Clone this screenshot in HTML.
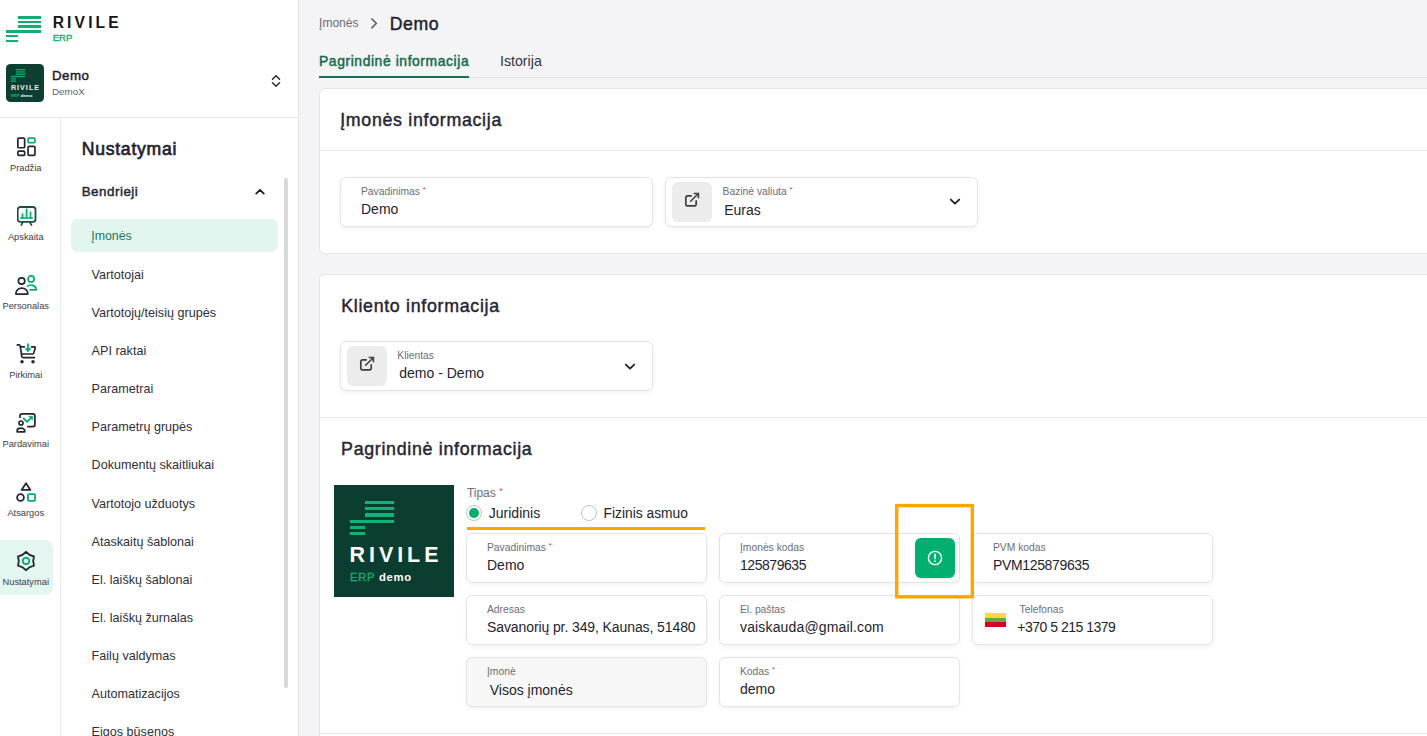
<!DOCTYPE html>
<html><head><meta charset="utf-8"><style>
html,body{margin:0;padding:0;width:1427px;height:736px;overflow:hidden;background:#fff;font-family:"Liberation Sans", sans-serif}
.t{position:absolute;white-space:nowrap;line-height:1}
.r{position:absolute}
</style></head><body>
<div class="r" style="left:0px;top:0px;width:298px;height:736px;background:#fff"></div>
<div class="r" style="left:298px;top:0px;width:1px;height:736px;background:#e6e6e8"></div>
<div class="r" style="left:0px;top:117px;width:298px;height:1px;background:#e6e6e8"></div>
<div class="r" style="left:60px;top:118px;width:1px;height:618px;background:#e9e9eb"></div>
<div class="r" style="left:18px;top:16px;width:23.299999999999997px;height:2.5px;background:#0fb070"></div>
<div class="r" style="left:18px;top:20.7px;width:23.299999999999997px;height:2.5px;background:#0fb070"></div>
<div class="r" style="left:18px;top:25.4px;width:23.299999999999997px;height:2.5px;background:#0fb070"></div>
<div class="r" style="left:6px;top:30.1px;width:35.3px;height:2.5px;background:#0fb070"></div>
<div class="r" style="left:6px;top:34.8px;width:12px;height:2.5px;background:#0fb070"></div>
<div class="r" style="left:6px;top:39.5px;width:12px;height:2.5px;background:#0fb070"></div>
<div class="t" style="left:52.70px;top:15.00px;font-size:15.6px;font-weight:700;color:#151515;letter-spacing:3.15px;">RIVILE</div>
<div class="t" style="left:52.80px;top:33.00px;font-size:9.6px;font-weight:400;color:#10b070;letter-spacing:-0.1px;-webkit-text-stroke:0.35px #10b070;">ERP</div>
<svg class="r" style="left:6px;top:64px" width="38" height="38" viewBox="0 0 38 38"><rect x="0" y="0" width="38" height="38" rx="4.5" fill="#0b3f31"/><rect x="9.9" y="5.0" width="9.3" height="1.25" fill="#0fb070"/><rect x="9.9" y="7.3" width="9.3" height="1.25" fill="#0fb070"/><rect x="9.9" y="9.6" width="9.3" height="1.25" fill="#0fb070"/><rect x="4.9" y="11.9" width="14.3" height="1.25" fill="#0fb070"/><rect x="4.9" y="14.2" width="5.1" height="1.25" fill="#0fb070"/><rect x="4.9" y="16.5" width="5.1" height="1.25" fill="#0fb070"/><text x="4.9" y="26.4" font-family="Liberation Sans" font-size="7.1" font-weight="700" fill="#f2f2f2" letter-spacing="1.05">RIVILE</text><text x="4.9" y="32.6" font-family="Liberation Sans" font-size="4.3" font-weight="700" fill="#0fb070">ERP <tspan fill="#fff">demo</tspan></text></svg>
<div class="t" style="left:51.90px;top:69.00px;font-size:13.3px;font-weight:400;color:#20202c;letter-spacing:0.55px;-webkit-text-stroke:0.45px #20202c;">Demo</div>
<div class="t" style="left:52.00px;top:87.00px;font-size:9.8px;font-weight:400;color:#5c6272;">DemoX</div>
<svg class="r" style="left:270px;top:73px" width="12" height="16" viewBox="0 0 12 16"><path d="M2.5 6.3 L6 2.8 L9.5 6.3 M2.5 9.7 L6 13.2 L9.5 9.7" fill="none" stroke="#2a2a2e" stroke-width="1.5" stroke-linecap="round" stroke-linejoin="round"/></svg>
<div class="r" style="left:0px;top:540px;width:53px;height:55px;background:#e4f6f0;border-radius:0 8px 8px 0"></div>
<svg class="r" style="left:16.5px;top:137px" width="20" height="20" viewBox="0 0 20 20"><rect x="0.85" y="1.15" width="6.8" height="9.6" rx="1" fill="none" stroke="#232634" stroke-width="1.7"/><rect x="11.05" y="1.15" width="6.9" height="4.6" rx="1" fill="none" stroke="#04ad6c" stroke-width="1.7"/><rect x="0.85" y="14.15" width="6.8" height="4.2" rx="1" fill="none" stroke="#232634" stroke-width="1.7"/><rect x="11.05" y="9.35" width="6.9" height="9.0" rx="1" fill="none" stroke="#232634" stroke-width="1.7"/></svg>
<div class="t" style="left:0;width:51.5px;text-align:center;top:163.93px;font-size:9.3px;color:#3b3b48">Pradžia</div>
<svg class="r" style="left:16.5px;top:206px" width="21" height="21" viewBox="0 0 21 21"><rect x="0.7" y="1" width="17.8" height="14.8" rx="2.6" fill="none" stroke="#1d4e41" stroke-width="1.8"/><path d="M3.8 12 H15.4" stroke="#04ad6c" stroke-width="1.7" stroke-linecap="round" fill="none"/><path d="M5.5 12 V8.1 M9.6 12 V3.4 M13.5 12 V6.3" stroke="#04ad6c" stroke-width="1.8" stroke-linecap="round" fill="none"/><path d="M5.7 16.4 L4.3 19.1 M12.9 16.4 L14.6 19.1" stroke="#1d4e41" stroke-width="1.7" stroke-linecap="round" fill="none"/></svg>
<div class="t" style="left:0;width:51.5px;text-align:center;top:232.93px;font-size:9.3px;color:#3b3b48">Apskaita</div>
<svg class="r" style="left:14px;top:274px" width="25" height="22" viewBox="0 0 25 22"><circle cx="7.6" cy="7" r="3.2" fill="none" stroke="#232634" stroke-width="1.7"/><path d="M1.95 20.05 L1.95 19.2 A5.9 5.1 0 0 1 13.75 19.2 L13.75 20.05 Z" fill="none" stroke="#232634" stroke-width="1.7" stroke-linejoin="round"/><circle cx="17.1" cy="4.9" r="3.05" fill="none" stroke="#04ad6c" stroke-width="1.7"/><path d="M12.9 12.6 C15.5 10.2 21 10.2 22.15 14.6 V15.85 H15.4" fill="none" stroke="#04ad6c" stroke-width="1.7" stroke-linejoin="round"/></svg>
<div class="t" style="left:0;width:51.5px;text-align:center;top:301.93px;font-size:9.3px;color:#3b3b48">Personalas</div>
<svg class="r" style="left:14px;top:342px" width="24" height="23" viewBox="0 0 24 23"><path d="M3.3 2.9 H5 Q6 2.9 6.2 3.9 L7.8 14.5 Q8 15.6 9.2 15.6 H20.5" fill="none" stroke="#232634" stroke-width="1.7" stroke-linecap="round" stroke-linejoin="round"/><path d="M7 4.9 H10.3 M17.5 4.9 H20.3 Q21.6 4.9 21.3 6.1 L19.6 11.2 Q19.3 12 18.5 12 H8.2" fill="none" stroke="#232634" stroke-width="1.7" stroke-linecap="round" stroke-linejoin="round"/><circle cx="8" cy="19.8" r="1.75" fill="#232634"/><circle cx="19" cy="19.8" r="1.75" fill="#232634"/><path d="M14 2.2 V7.5" stroke="#04ad6c" stroke-width="1.8" stroke-linecap="round" fill="none"/><path d="M11.2 6.6 H16.9 L14 9.9 Z" fill="#04ad6c" stroke="#04ad6c" stroke-width="0.6" stroke-linejoin="round"/></svg>
<div class="t" style="left:0;width:51.5px;text-align:center;top:370.93px;font-size:9.3px;color:#3b3b48">Pirkimai</div>
<svg class="r" style="left:14px;top:410px" width="24" height="24" viewBox="0 0 24 24"><path d="M6 7.3 V5.9 Q6 3.9 8 3.9 H18.9 Q20.9 3.9 20.9 5.9 V14.6 Q20.9 16.6 18.9 16.6 H13.9" fill="none" stroke="#232634" stroke-width="1.7" stroke-linecap="round"/><circle cx="7" cy="13" r="2" fill="none" stroke="#232634" stroke-width="1.7"/><path d="M3.15 21.85 V20.6 A3.8 2.4 0 0 1 10.75 20.6 V21.85 Z" fill="none" stroke="#232634" stroke-width="1.7" stroke-linejoin="round"/><path d="M9.7 8.5 L13.1 11.9 L17.4 7.6" fill="none" stroke="#04ad6c" stroke-width="1.8" stroke-linecap="round" stroke-linejoin="round"/><path d="M14.6 6.3 H18.5 V10.2 Z" fill="#04ad6c" stroke="#04ad6c" stroke-width="0.6" stroke-linejoin="round"/></svg>
<div class="t" style="left:0;width:51.5px;text-align:center;top:439.93px;font-size:9.3px;color:#3b3b48">Pardavimai</div>
<svg class="r" style="left:14px;top:480px" width="24" height="24" viewBox="0 0 24 24"><path d="M12 3.3 L16.4 9.9 H7.6 Z" fill="none" stroke="#232634" stroke-width="1.8" stroke-linejoin="round"/><circle cx="6.5" cy="17.5" r="3.4" fill="none" stroke="#232634" stroke-width="1.8"/><rect x="13.95" y="14.05" width="7.1" height="6.8" rx="1" fill="none" stroke="#04ad6c" stroke-width="1.8"/></svg>
<div class="t" style="left:0;width:51.5px;text-align:center;top:508.93px;font-size:9.3px;color:#3b3b48">Atsargos</div>
<svg class="r" style="left:14px;top:549px" width="24" height="24" viewBox="0 0 24 24"><path d="M12.00 2.80 Q15.20 6.46 19.97 7.40 Q18.40 12.00 19.97 16.60 Q15.20 17.54 12.00 21.20 Q8.80 17.54 4.03 16.60 Q5.60 12.00 4.03 7.40 Q8.80 6.46 12.00 2.80 Z" fill="none" stroke="#232634" stroke-width="1.8" stroke-linejoin="round"/><circle cx="12" cy="12" r="3.2" fill="none" stroke="#04ad6c" stroke-width="1.75"/></svg>
<div class="t" style="left:0;width:51.5px;text-align:center;top:577.93px;font-size:9.3px;color:#3b3b48">Nustatymai</div>
<div class="t" style="left:81.70px;top:141.00px;font-size:17.6px;font-weight:400;color:#22222e;letter-spacing:0.75px;-webkit-text-stroke:0.65px #22222e;">Nustatymai</div>
<div class="t" style="left:81.70px;top:185.00px;font-size:13.4px;font-weight:400;color:#262632;letter-spacing:0.5px;-webkit-text-stroke:0.45px #262632;">Bendrieji</div>
<svg class="r" style="left:254px;top:186px" width="12" height="10" viewBox="0 0 12 10"><path d="M2.2 7.6 L6 3.8 L9.8 7.6" fill="none" stroke="#1f1f2a" stroke-width="1.8" stroke-linecap="round" stroke-linejoin="round"/></svg>
<div class="r" style="left:71px;top:219px;width:207px;height:33px;background:#e3f5ef;border-radius:7px"></div>
<div class="t" style="left:91.20px;top:230.00px;font-size:12.4px;font-weight:400;color:#1b7c5c;">Įmonės</div>
<div class="t" style="left:91.60px;top:269.00px;font-size:12.6px;font-weight:400;color:#2f2f3c;">Vartotojai</div>
<div class="t" style="left:91.60px;top:307.00px;font-size:12.6px;font-weight:400;color:#2f2f3c;">Vartotojų/teisių grupės</div>
<div class="t" style="left:91.60px;top:345.00px;font-size:12.6px;font-weight:400;color:#2f2f3c;">API raktai</div>
<div class="t" style="left:91.60px;top:383.00px;font-size:12.6px;font-weight:400;color:#2f2f3c;">Parametrai</div>
<div class="t" style="left:91.60px;top:421.00px;font-size:12.6px;font-weight:400;color:#2f2f3c;">Parametrų grupės</div>
<div class="t" style="left:91.60px;top:459.00px;font-size:12.6px;font-weight:400;color:#2f2f3c;">Dokumentų skaitliukai</div>
<div class="t" style="left:91.60px;top:498.00px;font-size:12.6px;font-weight:400;color:#2f2f3c;">Vartotojo užduotys</div>
<div class="t" style="left:91.60px;top:536.00px;font-size:12.6px;font-weight:400;color:#2f2f3c;">Ataskaitų šablonai</div>
<div class="t" style="left:91.60px;top:574.00px;font-size:12.6px;font-weight:400;color:#2f2f3c;">El. laiškų šablonai</div>
<div class="t" style="left:91.60px;top:612.00px;font-size:12.6px;font-weight:400;color:#2f2f3c;">El. laiškų žurnalas</div>
<div class="t" style="left:91.60px;top:650.00px;font-size:12.6px;font-weight:400;color:#2f2f3c;">Failų valdymas</div>
<div class="t" style="left:91.60px;top:688.00px;font-size:12.6px;font-weight:400;color:#2f2f3c;">Automatizacijos</div>
<div class="t" style="left:91.60px;top:726.00px;font-size:12.6px;font-weight:400;color:#2f2f3c;">Eigos būsenos</div>
<div class="r" style="left:284px;top:178px;width:4px;height:510px;background:#d9d9db;border-radius:2px"></div>
<div class="r" style="left:299px;top:0px;width:1128px;height:736px;background:#f4f4f6"></div>
<div class="t" style="left:319.10px;top:17.00px;font-size:12px;font-weight:400;color:#6a6a76;">Įmonės</div>
<svg class="r" style="left:368px;top:17px" width="12" height="13" viewBox="0 0 12 13"><path d="M3.9 1.8 L8.3 6.3 L3.9 10.8" fill="none" stroke="#6b6b6e" stroke-width="1.7" stroke-linecap="round" stroke-linejoin="round"/></svg>
<div class="t" style="left:389.70px;top:16.00px;font-size:17.7px;font-weight:400;color:#22222e;letter-spacing:0.6px;-webkit-text-stroke:0.44px #22222e;">Demo</div>
<div class="r" style="left:469px;top:77px;width:958px;height:1px;background:#e3e3e4"></div>
<div class="t" style="left:319.00px;top:55.00px;font-size:13.9px;font-weight:400;color:#166a50;letter-spacing:0.58px;-webkit-text-stroke:0.48px #166a50;">Pagrindinė informacija</div>
<div class="r" style="left:319px;top:76px;width:150px;height:2px;background:#177156"></div>
<div class="t" style="left:500.00px;top:54.00px;font-size:14.2px;font-weight:400;color:#33333f;">Istorija</div>
<div class="r" style="left:319px;top:88px;width:1141px;height:166px;background:#fff;border:1px solid #e6e6e7;border-radius:6px;box-sizing:border-box"></div>
<div class="t" style="left:340.20px;top:112.00px;font-size:17.8px;font-weight:400;color:#262636;letter-spacing:0.7px;-webkit-text-stroke:0.45px #262636;">Įmonės informacija</div>
<div class="r" style="left:320px;top:150px;width:1107px;height:1px;background:#e9e9ea"></div>
<div class="r" style="left:340px;top:177px;width:313px;height:50px;background:#fff;border:1px solid #e3e3e4;border-radius:6px;box-sizing:border-box;box-shadow:0 2px 5px rgba(0,0,0,0.05)"></div>
<div class="t" style="left:361.00px;top:187.00px;font-size:10.3px;font-weight:400;color:#6d6d78;">Pavadinimas <span style="color:#e5383b;font-size:8px;position:relative;top:-3px">*</span></div>
<div class="t" style="left:361.00px;top:202.00px;font-size:14px;font-weight:400;color:#23232f;">Demo</div>
<div class="r" style="left:665px;top:177px;width:313px;height:50px;background:#fff;border:1px solid #e3e3e4;border-radius:6px;box-sizing:border-box;box-shadow:0 2px 5px rgba(0,0,0,0.05)"></div>
<div class="t" style="left:722.60px;top:187.00px;font-size:10.3px;font-weight:400;color:#6d6d78;">Bazinė valiuta <span style="color:#e5383b;font-size:8px;position:relative;top:-3px">*</span></div>
<div class="t" style="left:724.20px;top:203.00px;font-size:14px;font-weight:400;color:#23232f;">Euras</div>
<div class="r" style="left:672px;top:182px;width:40px;height:40px;background:#ececec;border-radius:6px"></div>
<svg class="r" style="left:684px;top:192px" width="16" height="16" viewBox="0 0 16 16"><path d="M7.8 3.8 H3.8 Q1.8 3.8 1.8 5.8 V11.9 Q1.8 13.9 3.8 13.9 H10.2 Q12.2 13.9 12.2 11.9 V8.2" fill="none" stroke="#3c3c3e" stroke-width="1.65"/><path d="M6.6 9.2 L14.2 1.7" fill="none" stroke="#3c3c3e" stroke-width="1.45" stroke-linecap="round"/><path d="M9.8 1.5 H14.4 V6.2" fill="none" stroke="#3c3c3e" stroke-width="1.6"/></svg>
<svg class="r" style="left:949px;top:197px" width="12" height="9" viewBox="0 0 12 9"><path d="M1.8 2.6 L6 6.6 L10.2 2.6" fill="none" stroke="#26262a" stroke-width="1.9" stroke-linecap="round" stroke-linejoin="round"/></svg>
<div class="r" style="left:319px;top:274px;width:1141px;height:486px;background:#fff;border:1px solid #e6e6e7;border-radius:6px;box-sizing:border-box"></div>
<div class="t" style="left:341.20px;top:298.00px;font-size:17.8px;font-weight:400;color:#262636;letter-spacing:0.7px;-webkit-text-stroke:0.45px #262636;">Kliento informacija</div>
<div class="r" style="left:340px;top:341px;width:313px;height:50px;background:#fff;border:1px solid #e3e3e4;border-radius:6px;box-sizing:border-box;box-shadow:0 2px 5px rgba(0,0,0,0.05)"></div>
<div class="t" style="left:397.30px;top:351.00px;font-size:10.3px;font-weight:400;color:#6d6d78;">Klientas</div>
<div class="t" style="left:399.30px;top:366.00px;font-size:14px;font-weight:400;color:#23232f;">demo - Demo</div>
<div class="r" style="left:347px;top:346px;width:40px;height:40px;background:#ececec;border-radius:6px"></div>
<svg class="r" style="left:359px;top:356px" width="16" height="16" viewBox="0 0 16 16"><path d="M7.8 3.8 H3.8 Q1.8 3.8 1.8 5.8 V11.9 Q1.8 13.9 3.8 13.9 H10.2 Q12.2 13.9 12.2 11.9 V8.2" fill="none" stroke="#3c3c3e" stroke-width="1.65"/><path d="M6.6 9.2 L14.2 1.7" fill="none" stroke="#3c3c3e" stroke-width="1.45" stroke-linecap="round"/><path d="M9.8 1.5 H14.4 V6.2" fill="none" stroke="#3c3c3e" stroke-width="1.6"/></svg>
<svg class="r" style="left:624px;top:362px" width="12" height="9" viewBox="0 0 12 9"><path d="M1.8 2.6 L6 6.6 L10.2 2.6" fill="none" stroke="#26262a" stroke-width="1.9" stroke-linecap="round" stroke-linejoin="round"/></svg>
<div class="r" style="left:320px;top:417px;width:1107px;height:1px;background:#e9e9ea"></div>
<div class="t" style="left:341.10px;top:441.00px;font-size:17.8px;font-weight:400;color:#262636;letter-spacing:0.7px;-webkit-text-stroke:0.45px #262636;">Pagrindinė informacija</div>
<div class="r" style="left:334px;top:485px;width:120px;height:112px;background:#0b3d31"><div style="position:absolute;left:30.69999999999999px;top:15.899999999999977px;width:29.30000000000001px;height:3.3px;background:#0fb374"></div><div style="position:absolute;left:30.69999999999999px;top:22.19999999999999px;width:29.30000000000001px;height:3.3px;background:#0fb374"></div><div style="position:absolute;left:30.69999999999999px;top:28.399999999999977px;width:29.30000000000001px;height:3.3px;background:#0fb374"></div><div style="position:absolute;left:16px;top:34.60000000000002px;width:44px;height:3.3px;background:#0fb374"></div><div style="position:absolute;left:16px;top:41px;width:14.699999999999989px;height:3.3px;background:#0fb374"></div><div style="position:absolute;left:16px;top:47px;width:14.699999999999989px;height:3.3px;background:#0fb374"></div></div>
<div class="t" style="left:349.50px;top:545.00px;font-size:21.4px;font-weight:700;color:#fff;letter-spacing:4.0px;">RIVILE</div>
<div class="t" style="left:350.00px;top:572.00px;font-size:11.3px;font-weight:400;color:#0fb374;letter-spacing:0.7px;-webkit-text-stroke:0.30px #0fb374;">ERP <span style="color:#fff;font-weight:700;-webkit-text-stroke:0 #fff">demo</span></div>
<div class="t" style="left:466.90px;top:487.00px;font-size:12px;font-weight:400;color:#6d6d78;">Tipas <span style="color:#e5383b;font-size:9px;position:relative;top:-3px">*</span></div>
<div class="r" style="left:466px;top:505px;width:16px;height:16px;border:1.2px solid #c2c2c4;border-radius:50%;box-sizing:border-box"></div>
<div class="r" style="left:469px;top:508px;width:10px;height:10px;background:#01b06f;border-radius:50%"></div>
<div class="t" style="left:488.80px;top:506.00px;font-size:14px;font-weight:400;color:#23232f;">Juridinis</div>
<div class="r" style="left:581px;top:505px;width:16px;height:16px;border:1.2px solid #c2c2c4;border-radius:50%;box-sizing:border-box"></div>
<div class="t" style="left:603.60px;top:507.00px;font-size:13.8px;font-weight:400;color:#23232f;">Fizinis asmuo</div>
<div class="r" style="left:467px;top:527px;width:238px;height:3px;background:#ffa500"></div>
<div class="r" style="left:466px;top:533px;width:241px;height:50px;background:#fff;border:1px solid #e3e3e4;border-radius:6px;box-sizing:border-box;box-shadow:0 2px 5px rgba(0,0,0,0.05)"></div>
<div class="t" style="left:487.00px;top:543.00px;font-size:10.3px;font-weight:400;color:#6d6d78;">Pavadinimas <span style="color:#e5383b;font-size:8px;position:relative;top:-3px">*</span></div>
<div class="t" style="left:487.00px;top:558.00px;font-size:14px;font-weight:400;color:#23232f;">Demo</div>
<div class="r" style="left:719px;top:533px;width:241px;height:50px;background:#fff;border:1px solid #e3e3e4;border-radius:6px;box-sizing:border-box;box-shadow:0 2px 5px rgba(0,0,0,0.05)"></div>
<div class="t" style="left:740.00px;top:543.00px;font-size:10.3px;font-weight:400;color:#6d6d78;">Įmonės kodas</div>
<div class="t" style="left:740.00px;top:558.00px;font-size:14px;font-weight:400;color:#23232f;letter-spacing:-0.45px;">125879635</div>
<div class="r" style="left:972px;top:533px;width:241px;height:50px;background:#fff;border:1px solid #e3e3e4;border-radius:6px;box-sizing:border-box;box-shadow:0 2px 5px rgba(0,0,0,0.05)"></div>
<div class="t" style="left:993.00px;top:543.00px;font-size:10.3px;font-weight:400;color:#6d6d78;">PVM kodas</div>
<div class="t" style="left:993.00px;top:558.00px;font-size:14px;font-weight:400;color:#23232f;letter-spacing:-0.35px;">PVM125879635</div>
<div class="r" style="left:466px;top:595px;width:241px;height:50px;background:#fff;border:1px solid #e3e3e4;border-radius:6px;box-sizing:border-box;box-shadow:0 2px 5px rgba(0,0,0,0.05)"></div>
<div class="t" style="left:487.00px;top:605.00px;font-size:10.3px;font-weight:400;color:#6d6d78;">Adresas</div>
<div class="t" style="left:487.00px;top:620.00px;font-size:14px;font-weight:400;color:#23232f;letter-spacing:-0.1px;">Savanorių pr. 349, Kaunas, 51480</div>
<div class="r" style="left:719px;top:595px;width:241px;height:50px;background:#fff;border:1px solid #e3e3e4;border-radius:6px;box-sizing:border-box;box-shadow:0 2px 5px rgba(0,0,0,0.05)"></div>
<div class="t" style="left:740.00px;top:605.00px;font-size:10.3px;font-weight:400;color:#6d6d78;">El. paštas</div>
<div class="t" style="left:740.00px;top:620.00px;font-size:14px;font-weight:400;color:#23232f;letter-spacing:0.15px;">vaiskauda@gmail.com</div>
<div class="r" style="left:972px;top:595px;width:241px;height:50px;background:#fff;border:1px solid #e3e3e4;border-radius:6px;box-sizing:border-box;box-shadow:0 2px 5px rgba(0,0,0,0.05)"></div>
<div class="t" style="left:1019.60px;top:605.00px;font-size:10.3px;font-weight:400;color:#6d6d78;">Telefonas</div>
<div class="t" style="left:1017.30px;top:620.00px;font-size:14px;font-weight:400;color:#23232f;letter-spacing:-0.5px;">+370 5 215 1379</div>
<div class="r" style="left:466px;top:657px;width:241px;height:50px;background:#f7f7f7;border:1px solid #e3e3e4;border-radius:6px;box-sizing:border-box;box-shadow:0 2px 5px rgba(0,0,0,0.05)"></div>
<div class="t" style="left:487.00px;top:667.00px;font-size:10.3px;font-weight:400;color:#6d6d78;">Įmonė</div>
<div class="t" style="left:489.70px;top:683.00px;font-size:14px;font-weight:400;color:#23232f;">Visos įmonės</div>
<div class="r" style="left:719px;top:657px;width:241px;height:50px;background:#fff;border:1px solid #e3e3e4;border-radius:6px;box-sizing:border-box;box-shadow:0 2px 5px rgba(0,0,0,0.05)"></div>
<div class="t" style="left:740.00px;top:667.00px;font-size:10.3px;font-weight:400;color:#6d6d78;">Kodas <span style="color:#e5383b;font-size:8px;position:relative;top:-3px">*</span></div>
<div class="t" style="left:740.00px;top:682.00px;font-size:14px;font-weight:400;color:#23232f;">demo</div>
<div class="r" style="left:985px;top:613px;width:21px;height:14px;background:linear-gradient(#ffd83f 0 33.3%,#68a645 33.3% 66.6%,#d80027 66.6%)"></div>
<div class="r" style="left:915px;top:538px;width:40px;height:40px;background:#01af6f;border-radius:6px;box-shadow:0 1px 3px rgba(0,0,0,0.12)"></div>
<svg class="r" style="left:926px;top:549px" width="18" height="18" viewBox="0 0 18 18"><circle cx="9" cy="9" r="6.6" fill="none" stroke="#fff" stroke-width="1.4"/><path d="M9 5.3 V9.8" stroke="#fff" stroke-width="1.5" stroke-linecap="round"/><circle cx="9" cy="12.2" r="0.85" fill="#fff"/></svg>
<div class="r" style="left:320px;top:733px;width:1107px;height:1px;background:#e9e9ea"></div>
<svg class="r" style="left:895px;top:503px" width="80" height="96" viewBox="0 0 80 96"><rect x="1.7" y="2.6" width="75.6" height="91.2" fill="none" stroke="#ffa500" stroke-width="3.4"/></svg>
</body></html>
